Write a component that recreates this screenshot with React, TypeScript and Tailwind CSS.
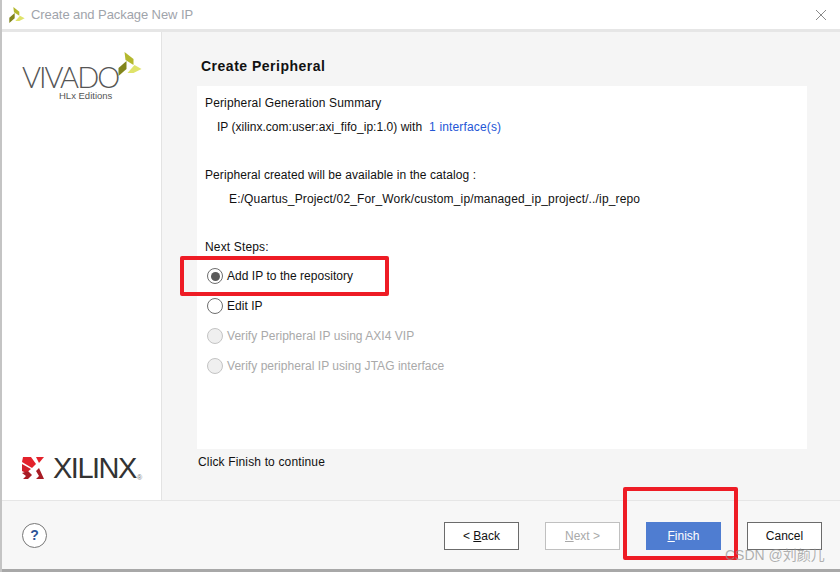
import React from "react";

function VivadoMark({ size }: { size: number }) {
  return (
    <svg width={size} height={size} viewBox="0 0 23 24">
      <path d="M6 0 L15 7 L15 13 L7 8 Z" fill="#b4b82e" />
      <path d="M8 9 L8 17 L0 24 L0 16 Z" fill="#82851c" />
      <path d="M9 21 L16 13 L23 17 L15 21 Z" fill="#dfe36a" />
    </svg>
  );
}

function XilinxMark() {
  return (
    <svg width="22" height="24" viewBox="0 0 22 24">
      <path d="M1 1 H9 L14 8 L10 12 L0 6 Z" fill="#e3222b" />
      <path d="M14 1 H22 L17 7 Z" fill="#e3222b" />
      <path d="M0 8 L9 13 L4 17 L0 15 Z" fill="#cf202a" />
      <path d="M0 17 L6 15 L10 19 L6 23 H1 L4 20 Z" fill="#a81c25" />
      <path d="M14 15 L17 12 L22 23 H14 L17 20 Z" fill="#a81c25" />
    </svg>
  );
}

function Radio({ checked, disabled }: { checked?: boolean; disabled?: boolean }) {
  return (
    <span
      className={`flex h-[16px] w-[16px] shrink-0 items-center justify-center rounded-full border ${
        disabled ? "border-[#c4c4c4] bg-[#efefef]" : "border-[#6e6e6e] bg-white"
      }`}
    >
      {checked && <span className="h-[9px] w-[9px] rounded-full bg-[#5a5a5a]" />}
    </span>
  );
}

function Option({ label, checked, disabled }: { label: string; checked?: boolean; disabled?: boolean }) {
  return (
    <div className="flex h-[30px] items-center gap-[4px] pl-[2px] tracking-[0.04px]">
      <Radio checked={checked} disabled={disabled} />
      <span className={disabled ? "text-[#a9a9a9]" : "text-[#111]"}>{label}</span>
    </div>
  );
}

export default function App() {
  return (
    <div
      className="relative flex h-[572px] w-[840px] flex-col overflow-hidden border-l-2 border-l-[#c4c4c4] bg-[#f7f7f7] text-[12px] text-[#111]"
      style={{ fontFamily: '"Liberation Sans", Arial, sans-serif' }}
    >
      <div className="flex h-[29px] shrink-0 items-center bg-white pl-[7px] pr-[13px]">
        <VivadoMark size={16} />
        <span className="ml-[6px] text-[13px] tracking-[-0.08px] text-[#9fa4ab]">Create and Package New IP</span>
        <svg className="ml-auto" width="12" height="12" viewBox="0 0 12 12">
          <path d="M1 1 L11 11 M11 1 L1 11" stroke="#8a8a8a" strokeWidth="1" />
        </svg>
      </div>
      <div className="h-[3px] shrink-0 bg-[#e6e6e6]" />

      <div className="flex min-h-0 flex-1">
        <aside className="flex w-[160px] shrink-0 flex-col justify-between border-r border-[#e3e3e3] bg-white pb-[17px] pl-[20px] pt-[20px]">
          <div className="relative h-[50px]">
            <span
              className="absolute left-0 top-[14px] text-[29px] font-light leading-[22px] tracking-[-2px] text-[#555]"
              style={{ fontFamily: 'Lato, "Liberation Sans", sans-serif' }}
            >
              VIVADO
            </span>
            <span className="absolute left-[37px] top-[38px] text-[9.5px] leading-[12px] text-[#555]">HLx Editions</span>
            <span className="absolute left-[96px] top-0">
              <VivadoMark size={24} />
            </span>
          </div>
          <div className="flex items-center gap-[9px]">
            <XilinxMark />
            <span className="text-[29px] leading-[30px] tracking-[-1.5px] text-[#333]">XILINX</span>
            <span className="-ml-[8px] self-end text-[7px] leading-[10px] text-[#777]">®</span>
          </div>
        </aside>

        <main className="flex min-w-0 flex-1 flex-col bg-[#f5f5f5] pl-[35px] pr-[33px]">
          <h1 className="h-[54px] pl-[4px] pt-[25px] text-[14px] font-bold leading-[18px] tracking-[0.5px] text-[#111]">
            Create Peripheral
          </h1>
          <section className="h-[363px] bg-white pl-[8px] pt-[9px] tracking-[0.15px]">
            <p className="h-[24px] leading-[16px]">Peripheral Generation Summary</p>
            <p className="h-[48px] pl-[12px] leading-[16px] tracking-[0.03px]">
              IP (xilinx.com:user:axi_fifo_ip:1.0) with
              <span className="ml-[7px] tracking-[0.15px] text-[#2456d6]">1 interface(s)</span>
            </p>
            <p className="h-[24px] leading-[16px] tracking-[0.08px]">Peripheral created will be available in the catalog :</p>
            <p className="h-[48px] pl-[24px] leading-[16px]">E:/Quartus_Project/02_For_Work/custom_ip/managed_ip_project/../ip_repo</p>
            <p className="h-[22px] leading-[16px]">Next Steps:</p>
            <Option label="Add IP to the repository" checked />
            <Option label="Edit IP" />
            <Option label="Verify Peripheral IP using AXI4 VIP" disabled />
            <Option label="Verify peripheral IP using JTAG interface" disabled />
          </section>
          <p className="pl-[1px] pt-[6px] leading-[14px] tracking-[0.15px]">Click Finish to continue</p>
        </main>
      </div>

      <footer className="flex h-[69px] shrink-0 items-center border-t border-t-[#e6e6e6] bg-[#f7f7f7] pl-[20px] pr-[18px] pt-[1px]">
        <span className="flex h-[25px] w-[25px] items-center justify-center rounded-full border border-[#777] bg-white text-[14px] font-bold text-[#2f5597]">
          ?
        </span>
        <button className="ml-auto h-[28px] w-[75px] border border-[#6b6b6b] bg-white text-[#111]">
          &lt; <u>B</u>ack
        </button>
        <button className="ml-[26px] h-[28px] w-[75px] border border-[#c0c0c0] bg-white text-[#a9a9a9]">
          <u>N</u>ext &gt;
        </button>
        <button className="ml-[26px] h-[28px] w-[75px] bg-[#4f7dd1] text-white">
          <u>F</u>inish
        </button>
        <button className="ml-[26px] h-[28px] w-[75px] border border-[#6b6b6b] bg-white text-[#111]">Cancel</button>
      </footer>
      <div className="h-[3px] shrink-0 bg-[#a8a8a8]" />

      {/* red annotation boxes */}
      <div className="absolute left-[178px] top-[256px] h-[40px] w-[209px] rounded-[2px] border-[4px] border-[#ee1c25]" />
      <div className="absolute left-[621px] top-[487px] h-[73px] w-[115px] rounded-[2px] border-[4px] border-[#ee1c25]" />
      {/* watermark */}
      <span
        className="absolute left-[723px] top-[545px] text-[14px] text-[#8f8f8f]/70"
        style={{ fontFamily: '"Liberation Sans", "Noto Sans CJK SC", sans-serif' }}
      >
        CSDN @刘颜儿
      </span>
    </div>
  );
}
